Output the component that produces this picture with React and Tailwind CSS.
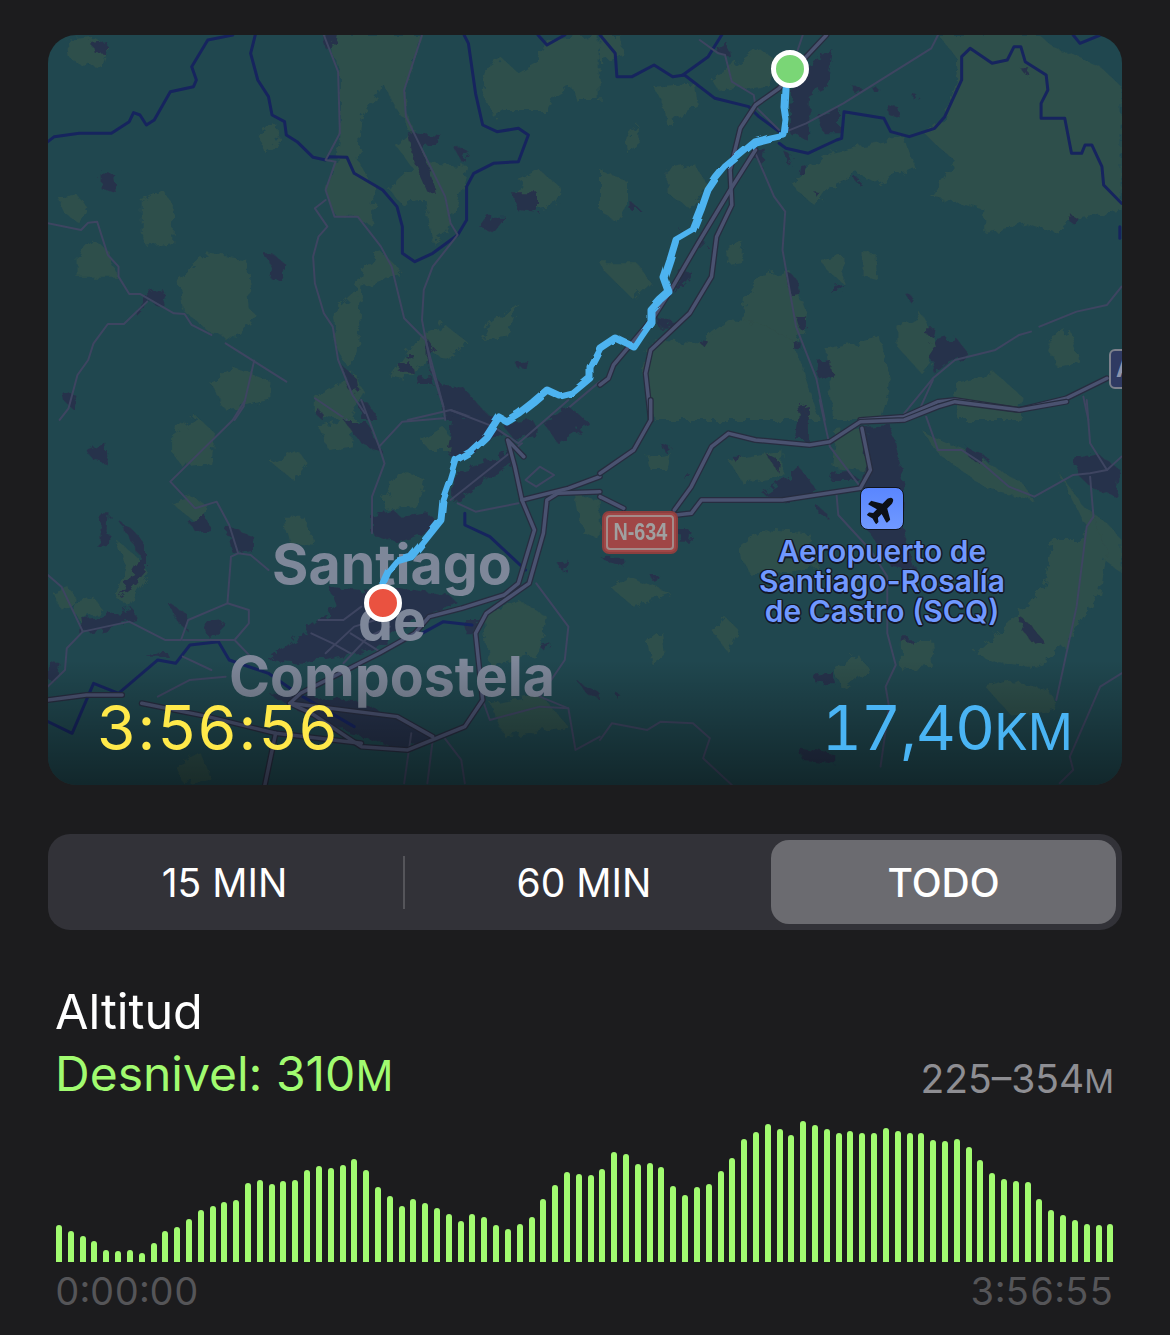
import { FaPlane } from 'react-icons/fa';

// map shapes are traced per quadrant, in that quadrant's own coordinates
const quadrants = [
  {
    t: 'translate(40 20) scale(.357 .3333)',
    greens: [
      'M75 60 L150 50 L190 80 L170 140 L110 130 L80 110Z',
      'M800 45 L1070 45 L1020 210 L1030 290 L1090 430 L1200 440 L1180 520 L1140 640 L1100 670 L1080 540 L1060 540 L1010 550 L980 510 L1000 480 L1040 440 L1000 380 L1040 340 L960 190 L900 300 L890 420 L920 480 L940 500 L930 620 L880 590 L830 590 L800 520 L830 420 L840 330 L840 160Z',
      'M1260 130 L1290 110 L1340 160 L1390 130 L1420 60 L1568 45 L1568 240 L1500 240 L1490 200 L1440 230 L1420 270 L1300 270 L1270 290 L1240 210Z',
      'M1350 480 L1400 450 L1465 510 L1440 560 L1370 570 L1330 530Z',
      'M285 540 L345 510 L375 560 L370 670 L300 680 L285 640Z',
      'M50 530 L100 520 L130 560 L110 610 L70 580Z',
      'M105 710 L150 660 L190 690 L215 770 L105 770Z',
      'M390 780 L470 700 L580 720 L590 870 L610 890 L550 950 L480 940 L400 870Z',
      'M610 340 L660 310 L670 360 L630 400Z',
      'M820 880 L880 820 L900 750 L950 690 L1010 750 L990 770 L900 800 L890 1000 L860 1040 L830 980Z',
      'M1060 950 L1130 910 L1200 970 L1140 1020 L1100 1000 L1020 1080 L980 1070Z',
      'M1260 910 L1340 850 L1310 950 L1240 960Z',
      'M480 1090 L540 1040 L640 1080 L640 1140 L520 1170Z',
      'M770 1130 L880 1060 L910 1120 L860 1200 L770 1180Z',
    ],
    towns: [
      'M145 65 L185 60 L185 100 L150 95Z',
      'M170 460 L210 465 L215 520 L170 505Z',
      'M625 700 L650 700 L690 735 L675 780 L645 775 L650 750Z',
      'M315 810 L340 805 L355 860 L310 850 L275 890 L270 875Z',
      'M1030 340 L1125 345 L1115 365 L1065 385 L1110 510 L1085 515 L1050 430Z',
      'M1150 370 L1200 395 L1185 430Z',
      'M1320 520 L1395 520 L1395 575 L1335 570Z',
      'M1235 625 L1260 590 L1305 590 L1270 640Z',
      'M790 45 L835 45 L830 65 L800 85Z',
      'M1080 950 L1110 990 L1100 1000 L1090 1040 L1130 1100 L1180 1095 L1250 1180 L1300 1200 L1130 1200 L1120 1120 L1080 1010Z',
      'M1005 1030 L1040 1030 L1045 1055 L1005 1055Z',
      'M1055 1070 L1095 1065 L1100 1095 L1060 1095Z',
      'M1330 1025 L1365 1020 L1360 1045 L1335 1040Z',
      'M1020 1005 L1050 1005 L1050 1015 L1030 1015Z',
      'M65 1120 L105 1130 L95 1170 L70 1145Z',
      'M840 1030 L890 1080 L895 1110 L870 1115Z',
      'M895 1150 L920 1150 L945 1200 L900 1200Z',
    ],
    rivers: [
      'M22 365 L40 350 L110 340 L200 340 L250 305 L262 278 L280 285 L298 315 L320 300 L365 215 L430 200 L438 180 L425 140 L470 60 L540 45',
      'M603 45 L590 100 L610 180 L640 230 L650 285 L685 305 L690 345 L720 365 L765 412 L800 420 L810 410 L860 412 L880 460 L960 510 L1000 560 L1015 620 L1015 700 L1050 725 L1100 700 L1170 645 L1195 600 L1195 500 L1215 460 L1270 430 L1340 425 L1368 345 L1340 325 L1280 335 L1240 315 L1220 220 L1200 70 L1188 45',
      'M1395 45 L1420 75 L1470 45',
    ],
    roads: [
      'M795 45 L835 155 L840 340 L800 420 L828 425 L800 510 L825 590 L890 590 L955 680 L985 740 L1020 895 L1080 960 L1130 1160 L1135 1200',
      'M800 540 L770 565 L805 620 L780 650 L765 710 L770 790 L795 880 L820 920 L835 1020 L875 1125 L910 1180',
      'M1070 45 L1020 210 L1025 290 L1135 530 L1150 610 L1170 645 L1100 740 L1075 810 L1070 900 L1095 1040 L1130 1160',
      'M22 610 L115 630 L135 608 L160 605 L190 705 L220 740 L220 770 L250 822 L280 822 L375 880 L405 882 L425 915 L480 945',
      'M520 970 L690 1085',
      'M300 845 L235 912 L190 912 L150 970 L135 1020 L105 1065 L80 1165 L55 1200',
      'M600 1022 L570 1160 L545 1200',
      'M770 1135 L860 1200',
      'M1030 1200 L1150 1170 L1230 1200',
      'M1568 1085 L1440 1200',
    ],
    highways: [],
  },
  {
    t: 'translate(600 20) scale(.338 .3333)',
    greens: [
      'M0 45 L60 45 L70 100 L0 130Z',
      'M160 200 L280 190 L290 260 L230 290 L200 320 L190 260Z',
      'M0 450 L80 480 L80 560 L50 610 L0 570Z',
      'M200 450 L280 430 L320 500 L270 570 L200 520Z',
      'M75 350 L110 310 L115 370 L80 400Z',
      'M330 180 L470 85 L520 120 L500 200 L440 210 L400 200 L350 210Z',
      'M700 45 L1000 45 L1060 120 L1050 200 L1020 290 L960 340 L1000 380 L1050 420 L980 530 L1140 570 L1140 640 L1260 610 L1350 640 L1400 600 L1543 570 L1543 200 L1480 140 L1340 80 L1300 45Z',
      'M570 490 L680 400 L900 350 L930 440 L820 490 L760 460 L680 500 L640 560 L580 510Z',
      'M0 730 L110 730 L150 790 L100 840 L20 760Z',
      'M380 670 L425 665 L420 730 L380 735Z',
      'M650 720 L720 710 L720 790 L680 760Z',
      'M780 700 L815 700 L820 780 L780 770Z',
      'M430 830 L470 770 L560 750 L620 900 L570 1000 L480 960 L420 900Z',
      'M150 960 L290 970 L380 900 L470 910 L570 960 L650 1200 L160 1200 L130 1060Z',
      'M670 990 L830 950 L860 1100 L830 1200 L690 1200Z',
      'M880 920 L950 880 L990 960 L1000 1000 L950 1060 L880 980Z',
      'M1320 960 L1390 930 L1420 1030 L1350 1040Z',
      'M1050 1090 L1170 1060 L1250 1130 L1240 1200 L1060 1200Z',
    ],
    towns: [
      'M345 80 L380 70 L385 110 L350 100Z',
      'M575 160 L618 130 L690 90 L670 200 L618 230 L615 360 L560 340 L565 220Z',
      'M645 285 L710 270 L710 340 L660 340Z',
      'M745 195 L780 210 L760 225Z',
      'M805 205 L830 210 L820 225Z',
      'M850 255 L885 265 L890 295 L855 285Z',
      'M920 215 L940 225 L925 235Z',
      'M1245 145 L1270 145 L1260 165Z',
      'M545 395 L570 410 L560 440Z',
      'M590 430 L615 440 L610 470 L585 460Z',
      'M630 510 L650 515 L640 530Z',
      'M755 475 L770 480 L765 495Z',
      'M90 545 L120 570 L90 570Z',
      'M300 640 L320 680 L290 680Z',
      'M240 630 L250 650 L230 640Z',
      'M690 800 L720 790 L715 810 L680 815Z',
      'M900 820 L925 830 L915 845Z',
      'M1390 580 L1415 595 L1410 620 L1395 610Z',
      'M170 895 L230 905 L190 920 L170 920Z',
      'M555 755 L575 770 L590 825 L565 830Z',
      'M580 890 L615 895 L615 925 L590 925Z',
      'M300 955 L320 965 L310 980 L295 970Z',
      'M575 970 L595 970 L590 995 L578 990Z',
      'M645 1025 L680 1020 L690 1060 L650 1080Z',
      'M965 925 L990 925 L985 950 L965 945Z',
      'M975 970 L1050 950 L1090 1000 L1030 1030 L990 1060Z',
      'M240 745 L275 760 L240 800 L220 820Z',
      'M455 380 L485 380 L480 445 L465 420Z',
      'M590 1160 L615 1155 L615 1200 L595 1200Z',
    ],
    rivers: [
      'M0 45 L45 100 L50 170 L95 170 L160 135 L215 170 L250 165 L340 235 L440 260 L470 290 L530 335',
      'M245 165 L320 110 L360 45',
      'M530 370 L550 385 L615 400 L700 360 L715 355 L722 275 L840 295 L860 335 L915 350 L990 325 L1020 290 L1070 180 L1070 110 L1095 85 L1160 130 L1205 120 L1225 80 L1245 80 L1258 125 L1320 165 L1325 210 L1305 250 L1305 295 L1375 295 L1395 400 L1425 400 L1435 375 L1455 375 L1485 440 L1490 495 L1543 550',
      'M1400 45 L1420 70 L1480 45',
      'M1538 620 L1538 655',
    ],
    roads: [
      'M295 60 L350 100 L370 105 L390 185 L455 225 L460 260 L530 330',
      'M460 400 L515 530 L548 575 L540 690 L580 920 L640 1075 L665 1200',
      'M550 335 L610 310 L720 250 L980 85 L1000 45',
      'M600 45 L585 90',
      'M900 1180 L985 1075 L1050 1020 L1170 990 L1240 945 L1275 935',
      'M1300 920 L1410 875 L1500 855 L1543 800',
      'M1430 1130 L1445 1200',
      'M945 1170 L985 1080',
    ],
    highways: [
      'M670 45 L610 110 L530 205 L460 255 L415 325 L385 450 L390 555 L345 650 L330 770 L265 880 L150 990 L135 1060 L150 1200',
      'M460 390 L385 510 L290 670 L210 810 L160 890 L40 1035 L25 1075 L0 1095',
      'M770 1200 L900 1190 L1000 1145 L1050 1140 L1240 1170 L1380 1135 L1500 1075',
    ],
  },
  {
    t: 'translate(40 400) scale(.357 .3333)',
    greens: [
      'M370 100 L440 50 L490 100 L480 190 L400 200 L370 160Z',
      'M650 190 L720 150 L750 190 L710 240Z',
      'M215 420 L270 470 L305 520 L250 620 L210 590 L240 500Z',
      'M90 610 L150 590 L175 630 L110 665Z',
      'M680 350 L740 350 L770 440 L700 430Z',
      'M780 80 L880 50 L870 140 L810 150Z',
      'M1070 120 L1130 80 L1170 150 L1090 150Z',
      'M960 300 L1010 210 L1080 240 L1060 320 L970 330Z',
      'M370 310 L430 290 L470 320 L450 380Z',
      'M1500 280 L1568 300 L1568 420 L1520 400Z',
      'M1240 650 L1340 600 L1420 650 L1400 760 L1260 800Z',
      'M1260 910 L1400 880 L1480 980 L1300 1010Z',
      'M40 580 L80 560 L100 600 L60 630Z',
      'M380 1100 L450 1060 L480 1140 L400 1150Z',
    ],
    towns: [
      'M930 350 L990 330 L1010 350 L1090 340 L1120 380 L1000 430 L930 400Z',
      'M810 560 L900 570 L1000 560 L1150 590 L1170 610 L1080 650 L1000 700 L950 740 L750 790 L640 780 L760 680 L830 620Z',
      'M1160 50 L1270 50 L1290 100 L1240 130 L1180 180 L1140 160Z',
      'M1160 220 L1290 170 L1340 130 L1320 190 L1160 310Z',
      'M1290 70 L1380 60 L1400 100 L1330 120Z',
      'M1410 70 L1480 20 L1540 70 L1450 130Z',
      'M850 60 L910 60 L960 160 L900 130Z',
      'M770 40 L785 30 L790 60Z',
      'M130 150 L180 125 L185 190 L150 180Z',
      'M170 340 L195 340 L190 440 L170 450Z',
      'M220 360 L260 390 L300 440 L300 510 L260 560 L220 590 L280 470Z',
      'M420 370 L460 340 L475 390 L440 400Z',
      'M520 380 L600 410 L590 450 L540 460Z',
      'M110 660 L170 650 L260 625 L270 660 L200 680 L110 700Z',
      'M360 610 L410 640 L420 700 L380 660Z',
      'M460 670 L510 660 L510 710 L470 710Z',
      'M330 750 L350 750 L360 770 L300 770Z',
      'M25 780 L55 790 L45 840 L25 840Z',
      'M640 880 L880 900 L1020 970 L1110 1010 L1020 1050 L900 1010 L720 930Z',
      'M1400 740 L1430 730 L1420 760Z',
      'M1510 850 L1568 880 L1568 900 L1530 880Z',
      'M1180 660 L1230 660 L1220 700 L1190 700Z',
      'M1450 490 L1480 480 L1470 520Z',
    ],
    rivers: [
      'M22 965 L90 1000 L150 850 L220 880 L330 780 L380 790 L420 735 L500 725 L530 780 L640 820 L720 880 L880 980',
      'M1190 340 L1190 375 L1260 410 L1360 510',
      'M1070 700 L1130 665 L1210 675',
    ],
    roads: [
      'M575 0 L540 60 L365 245 L435 325 L495 305 L530 375 L555 460 L590 465 L640 510',
      'M555 460 L535 470 L525 610 L415 660 L395 720 L350 720 L250 665 L120 695 L60 560 L22 525',
      'M120 695 L75 745 L70 810 L22 860',
      'M900 0 L950 140 L965 190 L930 290 L930 400',
      'M950 140 L1015 65 L1130 55',
      'M1150 30 L1270 80 L1340 130',
      'M1150 300 L1350 130',
      'M525 610 L585 630 L585 670 L545 720 L400 720',
      'M545 720 L590 770',
      'M1170 310 L1220 335 L1340 310',
      'M1480 0 L1340 130',
      'M1390 550 L1480 680 L1470 780 L1400 890 L1480 925 L1500 1050 L1568 1010',
      'M1240 900 L1260 960 L1400 920 L1480 925',
      'M330 890 L420 840 L520 830',
      'M400 770 L480 810',
      'M1130 1010 L1180 1080 L1190 1150',
      'M1100 1020 L1085 1150',
      'M1040 1000 L1020 1150',
      'M780 660 L850 660 L900 620',
      'M760 700 L820 730 L870 760',
      'M800 760 L880 680 L940 660',
      'M850 790 L920 710 L980 680',
      'M870 700 L960 760',
      'M1360 240 L1400 200 L1440 225 L1390 260Z',
    ],
    highways: [
      'M1568 230 L1480 265 L1350 300 L1330 200 L1310 120 L1355 170',
      'M1350 300 L1385 390 L1340 550 L1300 585 L1180 625 L1090 650 L1050 700 L950 760 L730 880 L700 910 L760 940 L900 1040 L1030 1050 L1190 980 L1240 900 L1220 700 L1250 640 L1370 550 L1410 400 L1420 300 L1450 280 L1568 275',
      'M22 900 L130 885 L230 885',
      'M285 910 L470 950 L660 1000 L900 1030',
      'M660 1000 L630 1155',
      'M700 910 L1000 950 L1100 1010',
    ],
  },
  {
    t: 'translate(600 400) scale(.338 .3333)',
    greens: [
      'M140 170 L210 160 L200 210 L150 210Z',
      'M380 180 L540 150 L540 230 L420 250Z',
      'M700 90 L780 80 L800 220 L690 200Z',
      'M960 100 L1100 160 L1250 250 L1280 300 L1150 270 L1000 160Z',
      'M1360 220 L1430 320 L1500 370 L1543 420 L1543 520 L1480 470Z',
      'M405 450 L480 390 L620 400 L640 500 L540 520 L450 530Z',
      'M330 690 L370 650 L410 690 L380 760Z',
      'M140 720 L180 690 L190 770 L150 790Z',
      'M690 810 L760 760 L800 810 L720 870Z',
      'M890 720 L980 720 L985 800 L890 810Z',
      'M1340 420 L1420 420 L1460 340 L1500 460 L1480 580 L1430 650 L1380 730 L1300 800 L1180 790 L1110 760 L1240 640 L1310 560Z',
      'M30 560 L80 530 L210 580 L100 620Z',
      'M1140 860 L1200 840 L1330 870 L1350 930 L1220 950Z',
    ],
    towns: [
      'M785 80 L860 75 L900 260 L895 390 L935 510 L860 500 L800 400 L780 380Z',
      'M480 280 L560 230 L590 200 L640 270 L540 310Z',
      'M590 20 L615 15 L615 120 L580 120Z',
      'M685 215 L730 210 L770 240 L680 240Z',
      'M180 130 L210 140 L190 155Z',
      'M390 170 L420 170 L410 195Z',
      'M490 160 L530 180 L525 215Z',
      'M250 220 L265 220 L250 240Z',
      'M1410 175 L1470 160 L1540 210 L1530 290 L1450 260 L1405 215Z',
      'M1085 140 L1150 175 L1130 195 L1090 170Z',
      'M1240 650 L1270 670 L1310 720 L1280 730 L1250 690Z',
      'M630 825 L690 815 L695 850 L640 850Z',
      'M590 1040 L690 1060 L690 1090 L600 1080Z',
      'M45 875 L60 885 L50 895Z',
      'M150 525 L175 525 L165 550Z',
      'M635 310 L670 340 L670 350 L650 345Z',
      'M0 470 L65 470 L70 500 L30 490Z',
      'M232 390 L265 390 L260 425 L235 425Z',
      'M890 715 L920 715 L920 725 L890 725Z',
    ],
    rivers: [],
    roads: [
      'M650 0 L680 140 L770 260',
      'M700 285 L705 345 L800 450 L850 530 L850 700 L875 795 L845 860 L855 920 L830 1100',
      'M965 50 L1000 150 L1070 150 L1130 190 L1210 260 L1285 290 L1400 225 L1450 220 L1500 210 L1543 170',
      'M1450 230 L1460 350 L1440 380 L1410 620 L1350 900',
      'M1440 0 L1450 130 L1500 210',
      'M1543 820 L1480 860 L1390 1070 L1400 1110 L1360 1150',
      'M0 1020 L35 970 L140 990 L180 965 L275 970 L325 1015 L305 1075 L390 1155',
    ],
    highways: [
      'M150 0 L150 60 L100 150 L0 220',
      'M220 330 L270 260 L330 140 L380 100 L460 120 L620 135 L680 125 L770 65 L900 60 L1000 20 L1050 5 L1240 30 L1380 5',
      'M225 345 L270 340 L300 300 L540 300 L770 265 L800 210 L775 85',
      'M0 290 L70 325',
    ],
  },
];

const route =
  'M785 88 L784 107 L786 120 L784 135 L770 138 L755 142 L743 152 L725 167 L716 178 L708 190 L701 210 L693 230 L676 240 L670 260 L664 278 L669 292 L660 300 L651 310 L651 322 L642 335 L634 347 L615 338 L600 348 L590 367 L590 378 L572 393 L560 396 L547 390 L533 402 L519 413 L506 421 L499 417 L486 437 L470 452 L456 460 L450 480 L443 500 L441 520 L425 540 L411 557 L397 561 L388 572 L383 583';

const altitude = [
  345, 365, 378, 393, 420, 424, 421, 430, 400, 364, 352, 327, 300, 290, 277, 271, 221, 212, 222, 214, 210, 181, 168, 175,
  166, 148, 181, 232, 260, 289, 268, 280, 295, 313, 333, 314, 322, 347, 358, 344, 321, 268, 226, 186, 193, 197, 178, 125,
  133, 163, 160, 173, 230, 256, 232, 223, 184, 143, 88, 66, 43, 56, 74, 34, 44, 56, 69, 64, 69, 70, 55, 62, 70, 70, 90, 92,
  88, 110, 151, 189, 208, 214, 218, 268, 302, 316, 332, 344, 346, 344,
];

const MapLines = () => (
  <svg viewBox="48 35 1074 750" className="absolute inset-0 w-full h-full">
    <defs>
      <filter id="rough" x="-5%" y="-5%" width="110%" height="110%">
        <feTurbulence type="fractalNoise" baseFrequency="0.035" numOctaves="3" seed="4" />
        <feDisplacementMap in="SourceGraphic" scale="34" />
      </filter>
    </defs>
    {quadrants.map((q) => (
      <g key={q.t} transform={q.t} fill="none" strokeLinejoin="round" strokeLinecap="round">
        <g filter="url(#rough)">
          {q.greens.map((d) => <path key={d} d={d} fill="#2e4f4b" />)}
          {q.towns.map((d) => <path key={d} d={d} fill="#28324b" />)}
        </g>
        {q.rivers.map((d) => <path key={d} d={d} stroke="#16245e" strokeWidth="3" vectorEffect="non-scaling-stroke" />)}
        {q.roads.map((d) => <path key={d} d={d} stroke="#3e4561" strokeWidth="2" vectorEffect="non-scaling-stroke" />)}
        {q.highways.map((d) => <path key={d} d={d} stroke="#272d40" strokeWidth="6" vectorEffect="non-scaling-stroke" />)}
        {q.highways.map((d) => <path key={d + 'i'} d={d} stroke="#4a5270" strokeWidth="3.5" vectorEffect="non-scaling-stroke" />)}
      </g>
    ))}
  </svg>
);

const App = () => {
  return (
    <div className="w-full h-[1335px] overflow-hidden bg-[#1c1c1e] px-12 pt-[35px] font-['Inter',sans-serif] text-white">
      <div className="relative h-[750px] overflow-hidden rounded-[28px] bg-[#20474f]">
        <MapLines />

        <div className="absolute left-[172px] top-[501px] w-[344px] text-center text-[55.5px] leading-[56px] font-bold text-[#7e8799]">
          <div>Santiago</div>
          <div>de</div>
          <div>Compostela</div>
        </div>

        <div className="absolute left-[554px] top-[476px] flex h-[43px] w-[76px] items-center justify-center rounded-[7px] border-[2px] border-[#8b3f3f] bg-[#a04646]">
          <div className="flex h-[35px] w-[68px] items-center justify-center rounded-[4px] border-[2px] border-[#a38b89] font-['Liberation_Sans',sans-serif] text-[23px] font-bold text-[#a0a0a0]">
            <span className="scale-x-[.86]">N-634</span>
          </div>
        </div>

        <div className="absolute left-[1061px] top-[314px] flex h-[40px] w-[40px] items-center rounded-[6px] border-[2px] border-[#7c808c] bg-[#2f3a62] pl-[5px] text-[24px] font-bold text-[#8d94ab]">
          A
        </div>

        <div className="absolute left-[812px] top-[452px] flex h-[43px] w-[44px] items-center justify-center rounded-[8px] border border-[#10141c] bg-linear-to-b from-[#5a86ff] to-[#7099ff] text-[#0d1017]">
          <FaPlane className="h-[30px] w-[30px] -rotate-45" />
        </div>
        <div className="absolute left-[684px] top-[501px] w-[300px] text-center text-[30px] leading-[30px] font-semibold text-[#7098ff] [text-shadow:1.5px_0_#141826,-1.5px_0_#141826,0_1.5px_#141826,0_-1.5px_#141826,1px_1px_#141826,-1px_-1px_#141826,1px_-1px_#141826,-1px_1px_#141826]">
          <div>Aeropuerto de</div>
          <div>Santiago-Rosalía</div>
          <div>de Castro (SCQ)</div>
        </div>

        <svg viewBox="48 35 1074 750" className="absolute inset-0 w-full h-full">
          <defs>
            <filter id="jitter" x="-5%" y="-5%" width="110%" height="110%">
              <feTurbulence type="fractalNoise" baseFrequency="0.06" numOctaves="1" seed="7" />
              <feDisplacementMap in="SourceGraphic" scale="5" />
            </filter>
          </defs>
          <path d={route} filter="url(#jitter)" fill="none" stroke="#4db3f0" strokeWidth="7" strokeLinejoin="round" strokeLinecap="round" />
        </svg>

        <div className="absolute left-[723px] top-[15px] h-[38px] w-[38px] rounded-full border-[5px] border-white bg-[#7ad676]" />
        <div className="absolute left-[316px] top-[549px] h-[38px] w-[38px] rounded-full border-[5px] border-white bg-[#ea5240]" />

        <div className="absolute inset-x-0 bottom-0 h-[125px] bg-linear-to-b from-transparent to-black/45" />

        <div className="absolute inset-x-[49px] bottom-[15px] flex items-baseline justify-between">
          <span className="text-[62px] leading-[76px] tracking-[2.3px] text-[#ffe94a]">3:56:56</span>
          <span className="text-[62px] leading-[76px] tabular-nums tracking-[-1px] text-[#4ab4f4]">
            17,40<span className="text-[50px] tracking-normal">KM</span>
          </span>
        </div>
      </div>

      <div className="mt-[49px] flex h-[96px] items-center rounded-[22px] bg-[#323238] p-[6px]">
        <button className="h-full w-[349px] pt-[2px] pr-[8px] text-[39px]">15 MIN</button>
        <div className="h-[53px] w-[2px] bg-[#55555a]" />
        <button className="h-full w-[358px] pt-[2px] text-[39px]">60 MIN</button>
        <button className="ml-[8px] h-full w-[345px] rounded-[18px] bg-[#6b6b70] pt-[2px] text-[39px] font-medium">TODO</button>
      </div>

      <div className="mt-[50px] px-2">
        <div className="-ml-[1px] text-[48.5px] leading-[64px]">Altitud</div>
        <div className="flex items-baseline justify-between">
          <span className="-ml-[1px] text-[48px] leading-[60px] text-[#a1fb70]">
            Desnivel: 310<span className="text-[42px]">M</span>
          </span>
          <span className="translate-y-[2px] text-[39px] text-[#8e8e93]">
            225–354<span className="text-[33px]">M</span>
          </span>
        </div>

        <div className="mt-[13px] flex h-[142px] items-end justify-between">
          {altitude.map((top, i) => (
            <div
              key={i}
              className="w-[6px] rounded-t-[3px] bg-[#a1fb70]"
              style={{ height: (456 - top) / 3.01 }}
            />
          ))}
        </div>

        <div className="mt-[6px] flex justify-between text-[38px] leading-[46px] tabular-nums text-[#555558]">
          <span className="-ml-[1px]">0:00:00</span>
          <span>3:56:55</span>
        </div>
      </div>
    </div>
  );
};

export default App;
